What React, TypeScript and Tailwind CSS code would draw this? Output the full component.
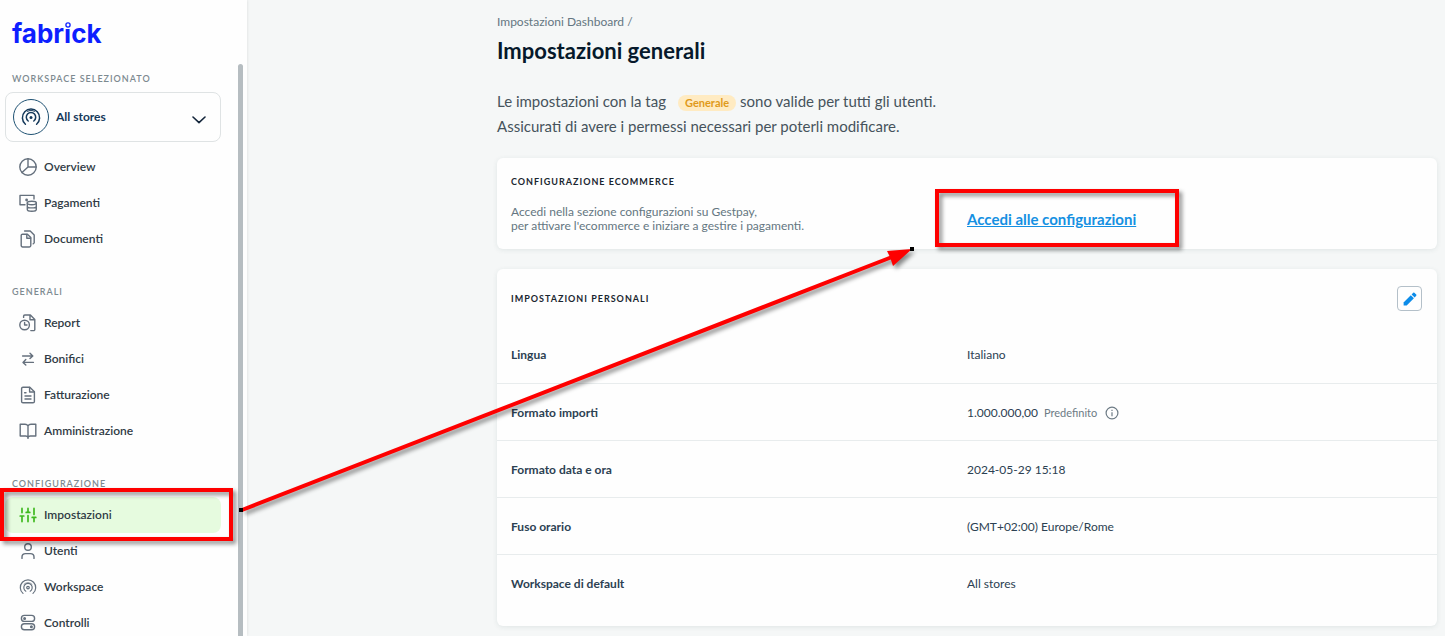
import type { ReactNode } from "react";

function Icon({ children, className = "" }: { children: ReactNode; className?: string }) {
  return (
    <svg
      viewBox="0 0 18 18"
      fill="none"
      stroke="currentColor"
      strokeWidth="1.4"
      strokeLinecap="round"
      strokeLinejoin="round"
      aria-hidden="true"
      className={`size-[18px] shrink-0 ${className}`}
    >
      {children}
    </svg>
  );
}

const icons = {
  overview: (
    <>
      <circle cx="9" cy="9" r="8.2" />
      <path d="M9 0.8V9H17.2M9 9L3 14.6" />
    </>
  ),
  payments: (
    <>
      <path d="M6 10.8H1V1.4H15V5" />
      <circle cx="7.6" cy="6" r="0.7" fill="currentColor" />
      <ellipse cx="12.8" cy="9" rx="4.5" ry="1.7" />
      <path d="M8.3 9V15.4C8.3 16.4 10.2 17.2 12.8 17.2S17.3 16.4 17.3 15.4V9M8.3 12.2C8.3 13.2 10.2 13.9 12.8 13.9S17.3 13.2 17.3 12.2" />
    </>
  ),
  documents: (
    <>
      <path d="M3.6 4.2H8.4L11.8 7.6V15.6A1.4 1.4 0 0 1 10.4 17H3.6A1.4 1.4 0 0 1 2.2 15.6V5.6A1.4 1.4 0 0 1 3.6 4.2Z" />
      <path d="M7.8 4.4V8.2H11.6M5.6 1H11.2L15.2 5V12.4A1.4 1.4 0 0 1 14.2 13.8" />
    </>
  ),
  report: (
    <>
      <circle cx="5.6" cy="11" r="4.8" />
      <path d="M5.6 8.4V11H8M4.6 3.4V2.2A1.2 1.2 0 0 1 5.8 1H11.4L15.8 5.4V15.4A1.2 1.2 0 0 1 14.6 16.6H11.8M11 1.2V5.8H15.6" />
    </>
  ),
  transfers: <path d="M3.6 6H13.6M11 3.2L13.8 6L11 8.6M14.4 12.4H4M6.8 9.6L4 12.4L6.8 15" />,
  invoice: (
    <>
      <path d="M4 1.2H10.8L15.4 5.8V15.4A1.4 1.4 0 0 1 14 16.8H4A1.4 1.4 0 0 1 2.6 15.4V2.6A1.4 1.4 0 0 1 4 1.2Z" />
      <path d="M10.6 1.4V6H15.2M5.6 6.8H7M6 10H12M6 13H12" />
    </>
  ),
  book: (
    <path d="M9 4C8.4 2.8 7.4 2.2 6 2.2H1.2V14H6.6C8 14 8.8 14.6 9 15.6C9.2 14.6 10 14 11.4 14H16.8V2.2H12C10.6 2.2 9.6 2.8 9 4ZM9 4V16.4" />
  ),
  settings: (
    <path d="M3 2.4V6.6M3 10V15.6M1.2 10H4.8M9 2.4V6.4M7.2 6.4H10.8M9 9.6V15.6M15 2.4V8.4M15 11.4V15.6M13.2 11.4H16.8" strokeWidth="1.7" />
  ),
  user: (
    <>
      <circle cx="9" cy="5" r="3.3" />
      <path d="M3 16.4V15C3 12.8 4.8 11.6 6.6 11.6H11.4C13.2 11.6 15 12.8 15 15V16.4" />
    </>
  ),
  workspace: (
    <>
      <circle cx="9" cy="9.6" r="1.3" strokeWidth="1.2" />
      <path d="M6.8 13.2A4.2 4.2 0 1 1 11.2 13.2M4 15.4A7.7 7.7 0 1 1 14 15.4" strokeWidth="1.2" />
      <path d="M5 6.2A5.6 5.6 0 0 1 13 6.2" strokeWidth="0.7" />
    </>
  ),
  controls: (
    <>
      <rect x="2.4" y="1.4" width="13.2" height="6" rx="3" />
      <rect x="2.4" y="9.8" width="13.2" height="6" rx="3" />
      <circle cx="5.6" cy="4.4" r="0.8" />
      <circle cx="12.4" cy="12.8" r="0.8" />
    </>
  ),
};

const groups = [
  {
    title: "",
    items: [
      { label: "Overview", icon: icons.overview },
      { label: "Pagamenti", icon: icons.payments },
      { label: "Documenti", icon: icons.documents },
    ],
  },
  {
    title: "Generali",
    items: [
      { label: "Report", icon: icons.report },
      { label: "Bonifici", icon: icons.transfers },
      { label: "Fatturazione", icon: icons.invoice },
      { label: "Amministrazione", icon: icons.book },
    ],
  },
  {
    title: "Configurazione",
    items: [
      { label: "Impostazioni", icon: icons.settings, active: true },
      { label: "Utenti", icon: icons.user },
      { label: "Workspace", icon: icons.workspace },
      { label: "Controlli", icon: icons.controls },
    ],
  },
];

const settings = [
  { label: "Lingua", value: "Italiano" },
  { label: "Formato importi", value: "1.000.000,00", note: "Predefinito" },
  { label: "Formato data e ora", value: "2024-05-29 15:18" },
  { label: "Fuso orario", value: "(GMT+02:00) Europe/Rome" },
  { label: "Workspace di default", value: "All stores" },
];

function Logo() {
  return (
    <a href="#" className="relative ml-[7px] block w-fit font-['Inter',sans-serif] text-[26px] leading-8 font-bold text-[#0d1fff]">
      fabrick
      <svg viewBox="0 0 8 8" className="absolute top-[3px] left-[52px] size-2" aria-hidden="true">
        <rect width="8" height="8" fill="#fefefe" />
        <circle cx="4" cy="4" r="2.1" fill="none" stroke="currentColor" strokeWidth="1.3" />
      </svg>
    </a>
  );
}

function Sidebar() {
  return (
    <aside className="flex w-[247px] shrink-0 justify-between overflow-hidden bg-[#fefefe] pr-1 pl-[5px] shadow-[0_0_3px_rgba(0,0,0,0.12)]">
      <div className="w-[216px] pt-[18px]">
        <Logo />
        <h2 className="mt-[21px] ml-[7px] text-[9px] leading-4 font-semibold tracking-[1px] text-[#7d8a90] uppercase">
          Workspace selezionato
        </h2>
        <button
          type="button"
          className="mt-[5px] flex h-[50px] w-full items-center gap-[7px] rounded-lg border border-[#dfe3e4] pr-[14px] pl-[7px] text-[#15395a]"
        >
          <span className="flex size-9 items-center justify-center rounded-full border border-[#1f5273]">
            <svg viewBox="0 0 22 22" fill="none" stroke="currentColor" strokeWidth="1.5" strokeLinecap="round" className="size-[22px]" aria-hidden="true">
              <circle cx="11" cy="11.4" r="1.5" fill="currentColor" stroke="none" />
              <path d="M8.2 15A4.7 4.7 0 1 1 13.8 15M5.4 18.2A8.6 8.6 0 1 1 16.6 18.2" />
              <path d="M7.4 5.2A7.2 7.2 0 0 1 14.6 5.2" strokeWidth="1" />
            </svg>
          </span>
          <span className="text-xs font-bold">All stores</span>
          <svg viewBox="0 0 14 8" fill="none" stroke="#14263b" strokeWidth="1.6" strokeLinecap="round" strokeLinejoin="round" className="mt-[6px] ml-auto h-2 w-3.5" aria-hidden="true">
            <path d="M1 1L7 6.6L13 1" />
          </svg>
        </button>
        <nav className="mt-[7px]">
          {groups.map((group) => (
            <section key={group.title} className="mb-[27px]">
              {group.title && (
                <h2 className="mb-[5px] ml-[7px] text-[9px] leading-4 font-semibold tracking-[1px] text-[#7d8a90] uppercase">
                  {group.title}
                </h2>
              )}
              {group.items.map((item) => (
                <a
                  key={item.label}
                  href="#"
                  className={`flex h-9 items-center gap-[7px] rounded-lg pl-[14px] text-xs font-semibold text-[#303b45] ${
                    "active" in item ? "bg-[#e6fbdf]" : ""
                  }`}
                >
                  <Icon className={"active" in item ? "text-[#3fb91f]" : "text-[#65707d]"}>{item.icon}</Icon>
                  {item.label}
                </a>
              ))}
            </section>
          ))}
        </nav>
      </div>
      <div className="mt-16 w-[5px] rounded-t-full bg-[#b6bdc1]" />
    </aside>
  );
}

// Red boxes and arrow drawn on top of the page
function Annotations() {
  return (
    <svg width="1200" height="560" className="pointer-events-none absolute top-0 left-0" aria-hidden="true">
      <g className="drop-shadow-[3px_3px_2px_rgba(0,0,0,0.45)]">
        <rect x="2" y="490" width="229" height="49" fill="none" stroke="#fe0000" strokeWidth="4" />
        <rect x="937" y="191" width="240" height="54" fill="none" stroke="#fe0000" strokeWidth="4" />
        <path d="M242 510L892 257" stroke="#fe0000" strokeWidth="4" />
        <path d="M912 249L887 251L890 257L893 266Z" fill="#fe0000" />
      </g>
      <rect x="239" y="508" width="4" height="4" fill="#000" />
      <rect x="910" y="247" width="4" height="4" fill="#000" />
    </svg>
  );
}

export default function App() {
  return (
    <div className="relative flex h-screen overflow-hidden bg-[#f5f7f7] font-['Lato',sans-serif] text-[#2c4152]">
      <Sidebar />
      <main className="min-w-0 flex-1 pt-3 pr-2 pl-[250px]">
        <a href="#" className="block text-xs leading-5 text-[#647681]">
          Impostazioni Dashboard /
        </a>
        <h1 className="mt-1 text-[22px] leading-[30px] font-bold text-[#06192b]">Impostazioni generali</h1>
        <p className="mt-[23px] text-[15px] leading-[25px] text-[#46535c]">
          Le impostazioni con la tag
          <span className="mr-1 ml-3 inline-block rounded-full bg-[#ffebc2] px-[7px] align-middle text-[11px] leading-4 font-bold text-[#e09a1a]">
            Generale
          </span>
          sono valide per tutti gli utenti.
          <br />
          Assicurati di avere i permessi necessari per poterli modificare.
        </p>

        <section className="mt-[19px] grid grid-cols-2 rounded-md bg-[#fefefe] py-4 shadow-[0_1px_5px_rgba(40,80,80,0.1)]">
          <div className="pl-[14px]">
            <h2 className="text-[9px] leading-4 font-bold tracking-[1px] text-[#1a2630] uppercase">
              Configurazione ecommerce
            </h2>
            <p className="mt-[15px] text-xs leading-[14px] text-[#647681]">
              Accedi nella sezione configurazioni su Gestpay,
              <br />
              per attivare l'ecommerce e iniziare a gestire i pagamenti.
            </p>
          </div>
          <a href="#" className="self-end justify-self-start text-[15px] leading-7 font-bold text-[#1590e2] underline">
            Accedi alle configurazioni
          </a>
        </section>

        <section className="mt-5 rounded-md bg-[#fefefe] pb-[15px] shadow-[0_1px_5px_rgba(40,80,80,0.1)]">
          <div className="flex h-[57px] items-center justify-between pt-[2px] pr-[15px] pl-[14px]">
            <h2 className="text-[9px] leading-4 font-bold tracking-[1px] text-[#1a2630] uppercase">
              Impostazioni personali
            </h2>
            <button
              type="button"
              aria-label="Modifica"
              className="flex size-[25px] items-center justify-center rounded border border-[#b4c0c9] text-[#0c8ce9]"
            >
              <svg viewBox="0 0 14 14" fill="currentColor" className="size-3.5" aria-hidden="true">
                <path d="M0.6 10.4L7.8 3.2L10.9 6.3L3.7 13.5H0.6Z" />
                <path d="M8.6 2.4L10.2 0.8Q10.8 0.3 11.4 0.8L13.2 2.6Q13.8 3.2 13.2 3.8L11.7 5.4Z" />
              </svg>
            </button>
          </div>
          <table className="w-full table-fixed text-left text-xs">
            <tbody>
              {settings.map((row) => (
                <tr key={row.label} className="h-[57px] border-b border-[#e8eced] last:border-b-0">
                  <th scope="row" className="w-1/2 pt-[2px] pl-[14px] font-bold">{row.label}</th>
                  <td className="pt-[2px]">
                    <div className="flex items-center">
                      {row.value}
                      {row.note && (
                        <>
                          <span className="ml-[6px] text-[11px] leading-4 text-[#6d7b85]">{row.note}</span>
                          <svg viewBox="0 0 14 14" fill="none" stroke="#6d7b85" strokeWidth="1.2" className="ml-2 size-3.5" aria-hidden="true">
                            <circle cx="7" cy="7" r="5.9" />
                            <path d="M7 6.2V10.2M7 3.8V5" />
                          </svg>
                        </>
                      )}
                    </div>
                  </td>
                </tr>
              ))}
            </tbody>
          </table>
        </section>
      </main>
      <Annotations />
    </div>
  );
}
